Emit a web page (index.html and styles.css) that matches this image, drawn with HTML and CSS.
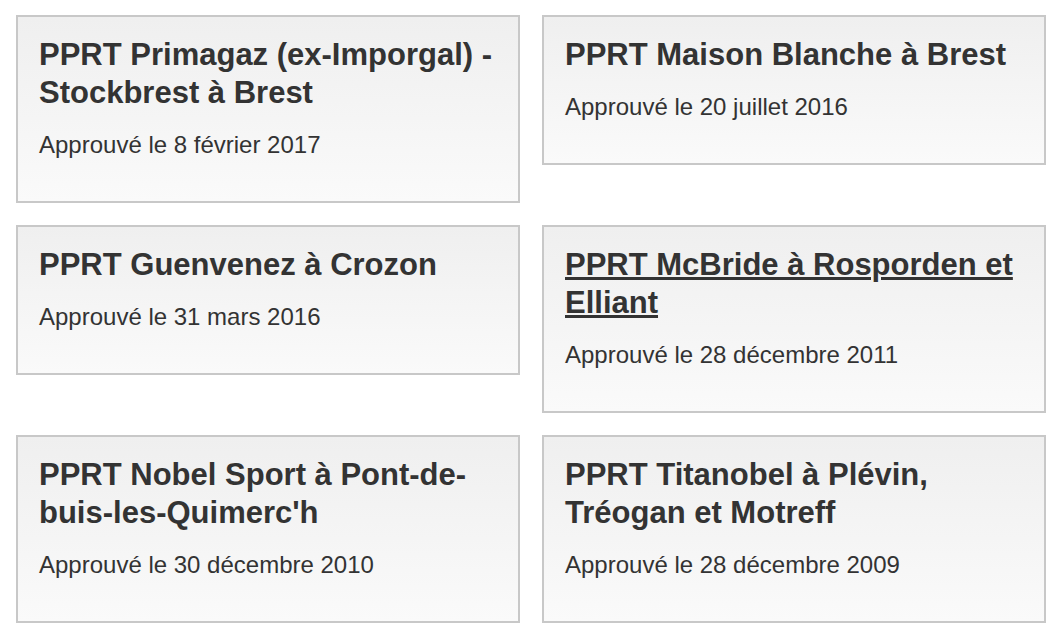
FILE: index.html
```html
<!DOCTYPE html>
<html lang="fr">
<head>
<meta charset="utf-8">
<title>PPRT</title>
<link rel="stylesheet" href="styles.css">
</head>
<body>
<div class="grid">
  <div class="card">
    <h2 class="title">PPRT Primagaz (ex-Imporgal) - Stockbrest à Brest</h2>
    <p class="date">Approuvé le 8 février 2017</p>
  </div>
  <div class="card">
    <h2 class="title">PPRT Maison Blanche à Brest</h2>
    <p class="date">Approuvé le 20 juillet 2016</p>
  </div>
  <div class="card">
    <h2 class="title">PPRT Guenvenez à Crozon</h2>
    <p class="date">Approuvé le 31 mars 2016</p>
  </div>
  <div class="card">
    <h2 class="title"><a class="link" href="#">PPRT McBride à Rosporden et Elliant</a></h2>
    <p class="date">Approuvé le 28 décembre 2011</p>
  </div>
  <div class="card">
    <h2 class="title">PPRT Nobel Sport à Pont-de-buis-les-Quimerc'h</h2>
    <p class="date">Approuvé le 30 décembre 2010</p>
  </div>
  <div class="card">
    <h2 class="title">PPRT Titanobel à Plévin, Tréogan et Motreff</h2>
    <p class="date">Approuvé le 28 décembre 2009</p>
  </div>
</div>
</body>
</html>
```
FILE: styles.css
```css
html, body {
  margin: 0;
  padding: 0;
  background: #ffffff;
}
body {
  font-family: "Liberation Sans", Arial, sans-serif;
  color: #333333;
}
.grid {
  display: grid;
  grid-template-columns: 504px 504px;
  column-gap: 22px;
  row-gap: 22px;
  align-items: start;
  padding: 15px 0 0 16px;
}
.card {
  box-sizing: border-box;
  border: 2px solid #c8c8c8;
  background: linear-gradient(to bottom, #efefef 0%, #fafafa 100%);
  padding: 19px 20px 20px 21px;
}
.title {
  margin: 0;
  font-size: 31px;
  line-height: 38px;
  font-weight: bold;
  color: #333333;
}
.link {
  color: #333333;
  text-decoration: underline;
}
.date {
  margin: 19px 0 22px;
  font-size: 24px;
  line-height: 28px;
  color: #333333;
}
```
